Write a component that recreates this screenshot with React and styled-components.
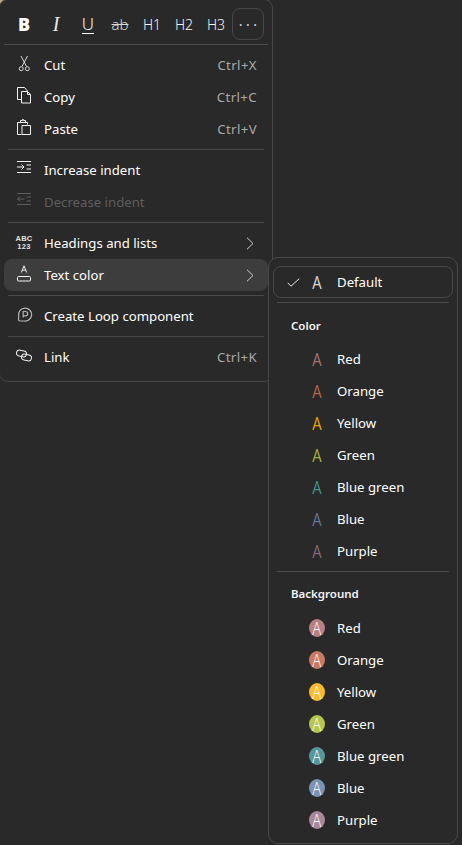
import React from 'react';
import styled, { createGlobalStyle } from 'styled-components';

const GlobalStyle = createGlobalStyle`
    html, body {
        margin: 0;
        padding: 0;
        background: #292929;
    }
    body {
        color: #fff;
        font-family: "Noto Sans", "Open Sans", sans-serif;
        font-size: 13.2px;
    }
`;

const Page = styled.div`
    position: relative;
    width: 462px;
    height: 845px;
    overflow: hidden;
    background: #292929;
    &::before {
        content: '';
        position: absolute;
        top: 0;
        left: 0;
        width: 5px;
        height: 5px;
        background: #b9a488;
    }
`;

const Menu = styled.div`
    position: relative;
    box-sizing: border-box;
    width: 274px;
    margin: -1px 0 0 -1px;
    padding-bottom: 8px;
    background: #292929;
    border: 1px solid #484848;
    border-left-color: #3a3a3a;
    border-radius: 9px;
`;

const Toolbar = styled.div`
    display: flex;
    padding: 8px 8px 4px;
`;

const ToolButton = styled.div`
    box-sizing: border-box;
    display: flex;
    align-items: center;
    justify-content: center;
    width: 32px;
    height: 32px;
    border-radius: 8px;
    border: 1px solid ${props => (props.$outlined ? '#484848' : 'transparent')};
    font-size: 14px;
    font-weight: 300;
    color: #f4f4f4;
`;

const BoldGlyph = styled.span`
    font-family: "Open Sans", sans-serif;
    font-size: 18px;
    font-weight: 800;
    color: #fff;
`;

const ItalicGlyph = styled.span`
    font-family: "Liberation Serif", serif;
    font-size: 20px;
    font-style: italic;
    color: #e8e8e8;
`;

const UnderlineGlyph = styled.span`
    font-size: 17px;
    line-height: 18px;
    font-weight: 300;
    border-bottom: 1px solid #f4f4f4;
`;

const StrikeGlyph = styled.span`
    font-size: 15px;
    font-weight: 300;
    text-decoration: line-through;
    color: #d8d8d8;
`;

const MoreDots = styled.span`
    font-size: 14px;
    font-weight: 400;
    letter-spacing: 3.500px;
    margin-right: -3.500px;
    color: #dcdcdc;
`;

const Divider = styled.div`
    height: 1px;
    margin: ${props => (props.$wide ? '0 4px 4px' : '4px 8px')};
    background: #4a4a4a;
`;

const Row = styled.div`
    display: flex;
    align-items: center;
    height: 32px;
    margin: 0 4px;
    padding: 0 ${props => (props.$chevron ? 14 : 11)}px 0 10px;
    border-radius: 8px;
    white-space: nowrap;
    background: ${props => (props.$active ? '#3d3d3d' : 'transparent')};
    color: ${props => (props.$disabled ? '#5e5e5e' : '#fff')};
`;

const IconSlot = styled.div`
    display: flex;
    flex: none;
    align-items: center;
    justify-content: center;
    width: 20px;
    height: 20px;
    margin-right: 10px;
`;

const Label = styled.span`
    flex: 1;
`;

const Shortcut = styled.span`
    color: #a9a9a9;
    letter-spacing: 0.4px;
`;

const AbcIcon = styled.div`
    display: flex;
    flex-direction: column;
    align-items: center;
    font-family: "Liberation Sans", sans-serif;
    font-size: 7.500px;
    font-weight: 700;
    line-height: 8px;
    letter-spacing: 0.3px;
    color: #e0e0e0;
`;

const SubMenu = styled.div`
    position: absolute;
    top: 257px;
    left: 268px;
    box-sizing: border-box;
    width: 190px;
    padding: 8px 0 7px;
    background: #292929;
    border: 1px solid #484848;
    border-radius: 10px;
`;

const ColorRow = styled(Row)`
    box-sizing: border-box;
    padding: 0 0 0 9px;
    border: 1px solid ${props => (props.$selected ? '#484848' : 'transparent')};
`;

const CheckSlot = styled.div`
    display: flex;
    flex: none;
    align-items: center;
    justify-content: center;
    width: 20px;
    margin-right: 4px;
`;

const SwatchSlot = styled.div`
    display: flex;
    flex: none;
    align-items: center;
    justify-content: center;
    width: 20px;
    margin-right: 10px;
`;

const Letter = styled.span`
    display: inline-block;
    font-family: "Open Sans", sans-serif;
    font-size: 19px;
    line-height: 20px;
    font-weight: ${props => (props.$thin ? 300 : 400)};
    transform: scaleX(0.78);
    color: ${props => props.$color};
`;

const Swatch = styled.span`
    display: flex;
    align-items: center;
    justify-content: center;
    width: 16px;
    height: 18px;
    border-radius: 50%;
    background: ${props => props.$color};
`;

const SectionTitle = styled.div`
    box-sizing: border-box;
    height: 36px;
    padding: ${props => props.$top}px 0 0 22px;
    font-size: 11.500px;
    line-height: 16px;
    font-weight: 600;
    color: #f4f4f4;
`;

const Stroke = ({ children, color = '#f2f2f2', width = 1 }) => (
    <svg width="20" height="20" viewBox="0 0 20 20" fill="none" stroke={color} strokeWidth={width}>
        {children}
    </svg>
);

const CutIcon = () => (
    <Stroke color="#d8d8d8">
        <path d="M7 1l5.500 10.500M13.500 1L8 11.500" />
        <circle cx="7.200" cy="13.700" r="2" />
        <circle cx="13.300" cy="13.700" r="2" />
    </Stroke>
);

const CopyIcon = () => (
    <Stroke>
        <path d="M7.500 12.500h-4V.5h7l3 3.500" />
        <path d="M7.500 4.500h6l3 3v8.500h-9z" />
        <path d="M13.500 4.500v3h3" />
    </Stroke>
);

const PasteIcon = () => (
    <Stroke>
        <path d="M7.500 15.500h-4v-12h10v2" />
        <path d="M6.500 3.500v-2h2V.5h1v1h2v2" />
        <path d="M8 6.500h8.500v9H8z" />
    </Stroke>
);

const IndentIcon = ({ color, back }) => (
    <Stroke color={color || '#f2f2f2'}>
        <path d="M3 1.500h14M3 12.500h14M12.500 5h4.500M12.500 9h4.500" />
        {back ? (
            <path d="M10.500 7H3.500M6 4.500L3.500 7 6 9.500" />
        ) : (
            <path d="M3 7h7M7.500 4.500L10 7l-2.500 2.500" />
        )}
    </Stroke>
);

const TextColorIcon = () => (
    <Stroke>
        <path d="M7.300 7.500L10 .8l2.700 6.700M8.200 5.200h3.600" />
        <rect x="3.500" y="11.500" width="13" height="4.500" rx="1" />
    </Stroke>
);

const LoopIcon = () => (
    <Stroke color="#b4b4b4" width={1.2}>
        <path d="M4.700 9.500a6.500 6.500 0 1 1 5.500 5.500H6a1.500 1.500 0 0 1-1.500-1.500z" />
        <path d="M9.200 11.500V5.500h2.300a2 2 0 0 1 0 4.300H9.200" />
    </Stroke>
);

const LinkIcon = () => (
    <Stroke>
        <rect x="2.500" y="3.500" width="10" height="6" rx="3" transform="rotate(12 7.500 6.500)" />
        <rect x="7.500" y="7.500" width="10" height="6" rx="3" transform="rotate(12 12.500 10.500)" />
    </Stroke>
);

const Chevron = () => (
    <svg width="8" height="13" viewBox="0 0 8 13" fill="none" stroke="#d0d0d0">
        <path d="M1 .7l6 5.800-6 5.800" />
    </svg>
);

const Check = () => (
    <svg width="13" height="9" viewBox="0 0 13 9" fill="none" stroke="#e8e8e8">
        <path d="M.7 4.800L4 8.200 12.300.6" />
    </svg>
);

const ItemRow = ({ icon, label, shortcut, chevron, ...rest }) => (
    <Row $chevron={chevron} {...rest}>
        <IconSlot>{icon}</IconSlot>
        <Label>{label}</Label>
        {shortcut && <Shortcut>{shortcut}</Shortcut>}
        {chevron && <Chevron />}
    </Row>
);

const textColors = [
    ['Red', '#a5716f'],
    ['Orange', '#b5654f'],
    ['Yellow', '#e8a40c'],
    ['Green', '#a3b03a'],
    ['Blue green', '#3f9288'],
    ['Blue', '#5f7698'],
    ['Purple', '#84687a'],
];

const backgroundColors = [
    ['Red', '#b88084'],
    ['Orange', '#c97a63'],
    ['Yellow', '#fdb92e'],
    ['Green', '#b5c64e'],
    ['Blue green', '#56999c'],
    ['Blue', '#7a92b4'],
    ['Purple', '#a8889b'],
];

const App = () => (
    <Page>
        <GlobalStyle />
        <Menu>
            <Toolbar>
                <ToolButton><BoldGlyph>B</BoldGlyph></ToolButton>
                <ToolButton><ItalicGlyph>I</ItalicGlyph></ToolButton>
                <ToolButton><UnderlineGlyph>U</UnderlineGlyph></ToolButton>
                <ToolButton><StrikeGlyph>ab</StrikeGlyph></ToolButton>
                <ToolButton>H1</ToolButton>
                <ToolButton>H2</ToolButton>
                <ToolButton>H3</ToolButton>
                <ToolButton $outlined><MoreDots>···</MoreDots></ToolButton>
            </Toolbar>
            <Divider $wide />
            <ItemRow icon={<CutIcon />} label="Cut" shortcut="Ctrl+X" />
            <ItemRow icon={<CopyIcon />} label="Copy" shortcut="Ctrl+C" />
            <ItemRow icon={<PasteIcon />} label="Paste" shortcut="Ctrl+V" />
            <Divider />
            <ItemRow icon={<IndentIcon />} label="Increase indent" />
            <ItemRow icon={<IndentIcon back color="#5e5e5e" />} label="Decrease indent" $disabled />
            <Divider />
            <ItemRow
                icon={<AbcIcon><span>ABC</span><span>123</span></AbcIcon>}
                label="Headings and lists"
                chevron
            />
            <ItemRow icon={<TextColorIcon />} label="Text color" chevron $active />
            <Divider />
            <ItemRow icon={<LoopIcon />} label="Create Loop component" />
            <Divider />
            <ItemRow icon={<LinkIcon />} label="Link" shortcut="Ctrl+K" />
        </Menu>
        <SubMenu>
            <ColorRow $selected>
                <CheckSlot><Check /></CheckSlot>
                <SwatchSlot><Letter $color="#d8d8d8">A</Letter></SwatchSlot>
                <Label>Default</Label>
            </ColorRow>
            <Divider />
            <SectionTitle $top={11}>Color</SectionTitle>
            {textColors.map(([name, color]) => (
                <ColorRow key={name}>
                    <CheckSlot />
                    <SwatchSlot><Letter $color={color}>A</Letter></SwatchSlot>
                    <Label>{name}</Label>
                </ColorRow>
            ))}
            <Divider />
            <SectionTitle $top={10}>Background</SectionTitle>
            {backgroundColors.map(([name, color]) => (
                <ColorRow key={name}>
                    <CheckSlot />
                    <SwatchSlot><Swatch $color={color}><Letter $thin $color="#fff">A</Letter></Swatch></SwatchSlot>
                    <Label>{name}</Label>
                </ColorRow>
            ))}
        </SubMenu>
    </Page>
);

export default App;
